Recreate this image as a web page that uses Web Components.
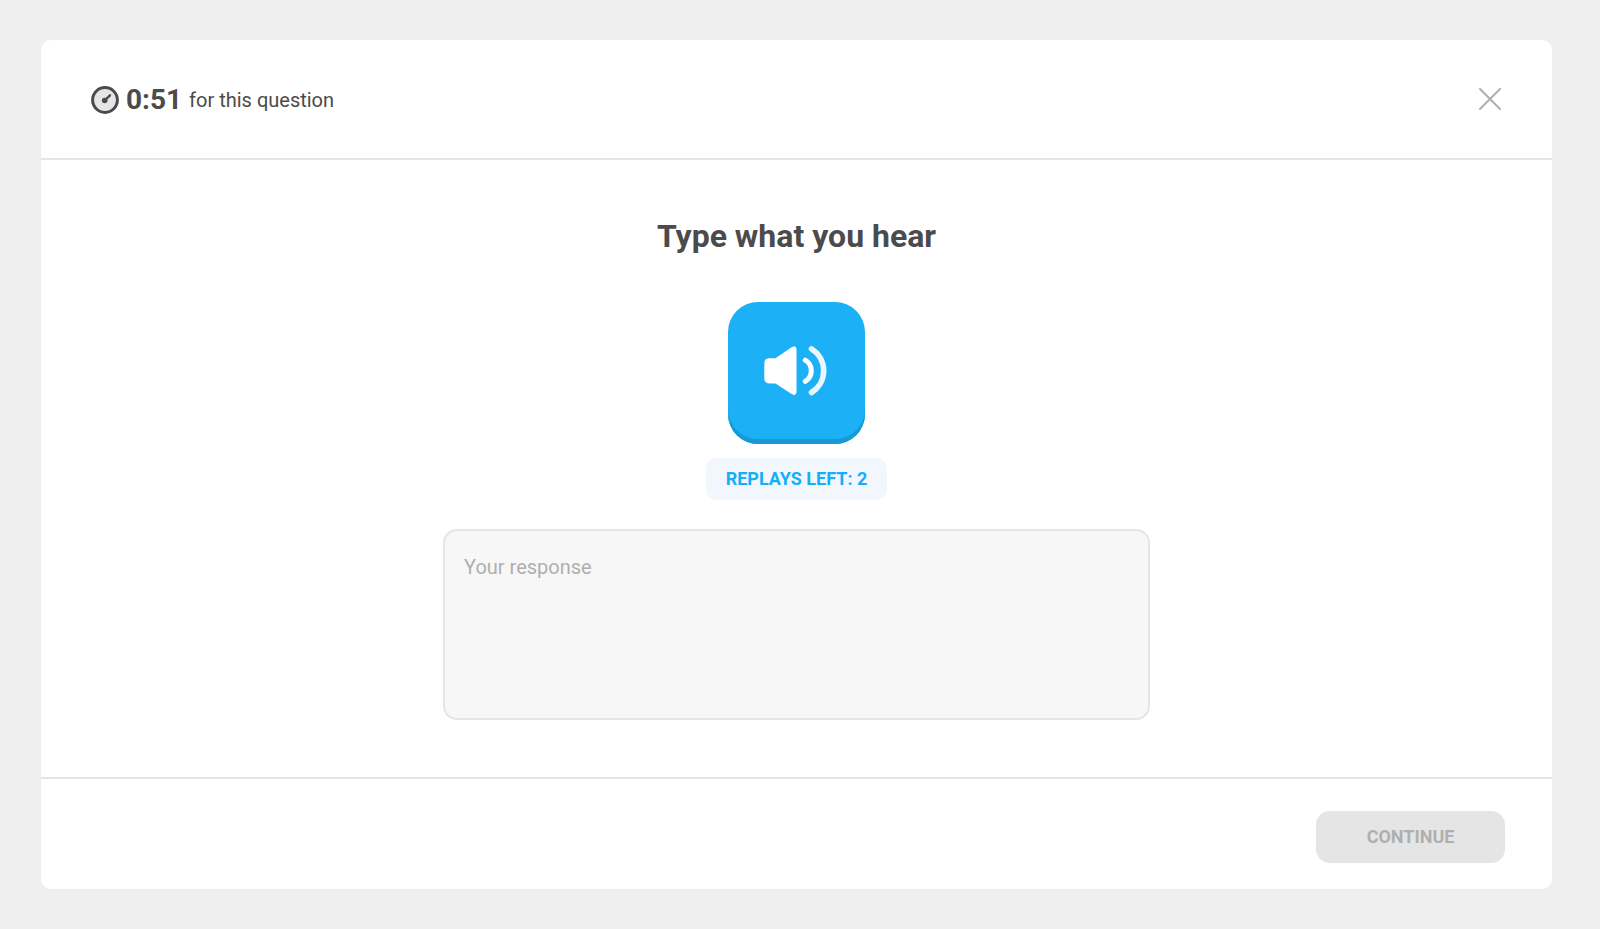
<!DOCTYPE html>
<html lang="en">
<head>
<meta charset="utf-8">
<meta name="viewport" content="width=device-width, initial-scale=1">
<title>Type what you hear</title>
<style>
  body {
    margin: 0;
    background: #efefef;
    color: #4b4b4b;
    font-family: Roboto, "Open Sans", sans-serif;
  }
</style>
</head>
<body>
<test-page>
  <question-header slot="header" time="0:51">for this question</question-header>
  <listen-challenge heading="Type what you hear">
    <play-button slot="player"></play-button>
    <replay-badge slot="player">REPLAYS LEFT: 2</replay-badge>
    <response-field slot="answer" label="Your response"></response-field>
  </listen-challenge>
  <question-footer slot="footer">CONTINUE</question-footer>
</test-page>

<script>
  const define = (name, render) => {
    customElements.define(name, class extends HTMLElement {
      constructor() {
        super();
        this.attachShadow({ mode: "open" });
      }
      connectedCallback() {
        this.shadowRoot.innerHTML = render(this);
      }
    });
  };

  define("test-page", () => `
    <style>
      :host {
        display: flex;
        box-sizing: border-box;
        min-height: 100vh;
        padding: 40px 48px 40px 41px;
      }
      .card {
        flex: 1;
        display: flex;
        flex-direction: column;
        border-radius: 10px;
        background: #fff;
      }
      main { flex: 1; }
    </style>
    <div class="card">
      <slot name="header"></slot>
      <main><slot></slot></main>
      <slot name="footer"></slot>
    </div>`);

  define("question-header", (el) => `
    <style>
      :host { display: block; border-bottom: 2px solid #e5e5e5; }
      header {
        display: flex;
        align-items: center;
        justify-content: space-between;
        height: 118px;
        padding: 0 46px 0 50px;
      }
      .timer { display: flex; align-items: center; gap: 7px; font-size: 20px; line-height: 32px; padding-top: 1px; }
      strong { font-size: 28px; }
      svg { display: block; }
      button {
        padding: 5px;
        border: 0;
        background: none;
        color: #afafaf;
        cursor: pointer;
      }
    </style>
    <header>
      <div class="timer">
        <svg width="28" height="28" viewBox="0 0 28 28" aria-hidden="true">
          <circle cx="14" cy="14" r="12.4" fill="#e5e5e5" stroke="#4b4b4b" stroke-width="3"/>
          <circle cx="13.7" cy="14.5" r="2.8" fill="#4b4b4b"/>
          <path d="M14 14.2 19 9.3" stroke="#4b4b4b" stroke-width="2.4" stroke-linecap="round"/>
        </svg>
        <strong>${el.getAttribute("time")}</strong>
        <span><slot></slot></span>
      </div>
      <button type="button" aria-label="Close">
        <svg width="22" height="22" viewBox="0 0 22 22" fill="none" stroke="currentColor" stroke-width="2" stroke-linecap="round">
          <path d="M1 1 21 21M21 1 1 21"/>
        </svg>
      </button>
    </header>`);

  define("listen-challenge", (el) => `
    <style>
      :host {
        display: flex;
        flex-direction: column;
        align-items: center;
        padding: 56px 24px;
      }
      h1 { margin: 0 0 46px; font-size: 32px; line-height: 40px; text-align: center; }
      .player { display: flex; flex-direction: column; align-items: center; gap: 14px; }
      .answer { width: 100%; max-width: 707px; margin-top: 29px; }
    </style>
    <h1>${el.getAttribute("heading")}</h1>
    <div class="player"><slot name="player"></slot></div>
    <div class="answer"><slot name="answer"></slot></div>`);

  define("play-button", () => `
    <style>
      :host { display: block; }
      button {
        display: grid;
        place-items: center;
        box-sizing: border-box;
        width: 137px;
        height: 142px;
        padding: 0;
        border: 0;
        border-radius: 30px;
        background: #1cb0f6;
        box-shadow: inset 0 -5px #1899d6;
        cursor: pointer;
      }
      svg { display: block; margin-bottom: 5px; }
    </style>
    <button type="button" aria-label="Play audio">
      <svg width="64" height="50" viewBox="0 0 64 50" fill="none">
        <path d="M4.5 12.3H11.5L27.6 1.2Q29.5 0 31 .6 32.5 1.3 32.5 3.4V45.8Q32.5 48 31 48.7 29.5 49.3 27.6 48.1L11.5 37.6H6Q3.5 37.6 1.8 36.2 .3 35 .3 32.5V17Q.3 12.8 4.5 12.3Z" fill="#fff"/>
        <path d="M41.3 14.2A12.4 12.4 0 0 1 41.3 35.4" stroke="#fff" stroke-width="5" stroke-linecap="round"/>
        <path d="M47.5 2.9A25.6 25.6 0 0 1 47.5 46.5" stroke="#eaf6fe" stroke-width="5.6" stroke-linecap="round"/>
      </svg>
    </button>`);

  define("replay-badge", () => `
    <style>
      :host {
        display: block;
        padding: 9px 20px;
        border-radius: 10px;
        background: #f1f7fc;
        color: #14aefa;
        font-size: 18px;
        font-weight: 700;
        line-height: 24px;
      }
    </style>
    <slot></slot>`);

  define("response-field", (el) => `
    <style>
      :host { display: block; }
      textarea {
        display: block;
        box-sizing: border-box;
        width: 100%;
        height: 191px;
        padding: 22px 19px;
        border: 2px solid #e5e5e5;
        border-radius: 14px;
        background: #f7f7f7;
        color: #4b4b4b;
        font: inherit;
        font-size: 20px;
        line-height: 28px;
        resize: none;
      }
      textarea::placeholder { color: #afafaf; opacity: 1; }
    </style>
    <textarea aria-label="${el.getAttribute("label")}" placeholder="${el.getAttribute("label")}"></textarea>`);

  define("question-footer", () => `
    <style>
      :host { display: block; border-top: 2px solid #e5e5e5; }
      footer { display: flex; justify-content: flex-end; padding: 32px 47px 26px; }
      button {
        min-width: 189px;
        height: 52px;
        padding: 0 32px 2px;
        border: 0;
        border-radius: 14px;
        background: #e5e5e5;
        color: #afafaf;
        font: inherit;
        font-size: 18px;
        font-weight: 700;
      }
    </style>
    <footer><button type="button" disabled><slot></slot></button></footer>`);
</script>
</body>
</html>
